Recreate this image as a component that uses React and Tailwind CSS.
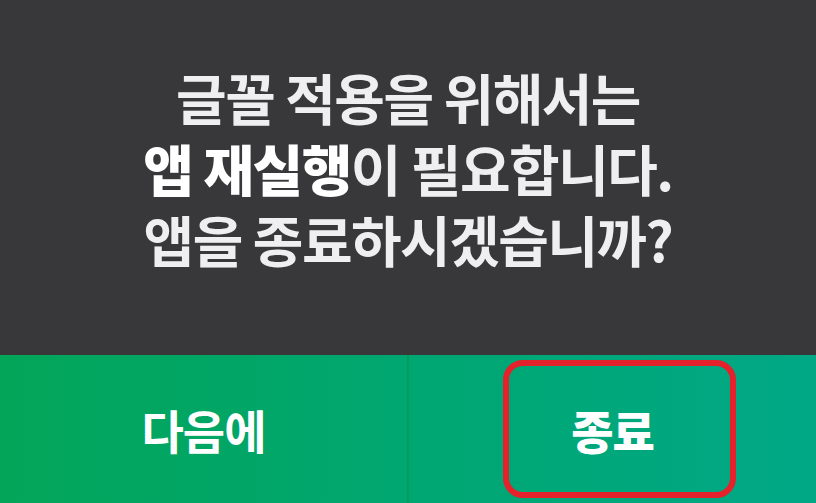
import React from "react";

const App = () => {
  return (
    <div
      className="w-[816px] h-[503px] bg-[#38383a] flex flex-col overflow-hidden"
      style={{ fontFamily: '"Noto Sans CJK KR", "Noto Sans", sans-serif' }}
    >
      {/* message */}
      <div className="h-[355px] flex flex-col items-center justify-center gap-[19px] pb-[22px] text-[55px] leading-[52px] font-bold text-[#efeff1] tracking-[-1.5px]">
        <p>글꼴 적용을 위해서는</p>
        <p>
          <span className="font-black text-white">앱 재실행</span>이 필요합니다.
        </p>
        <p>앱을 종료하시겠습니까?</p>
      </div>

      {/* buttons */}
      <div className="relative flex-1 flex bg-gradient-to-r from-[#03a558] to-[#01a886]">
        <button className="flex-1 flex items-center justify-center text-white text-[46px] font-bold tracking-[-1px]">
          다음에
        </button>
        <div className="w-[2px] bg-[#039c5e]" />
        <button className="flex-1 flex items-center justify-center text-white text-[46px] font-black tracking-[-1px]">
          종료
        </button>

        {/* highlight box */}
        <div className="absolute left-[503px] top-[5px] w-[233px] h-[138px] border-[6px] border-[#e5212b] rounded-[20px]" />
      </div>
    </div>
  );
};

export default App;
